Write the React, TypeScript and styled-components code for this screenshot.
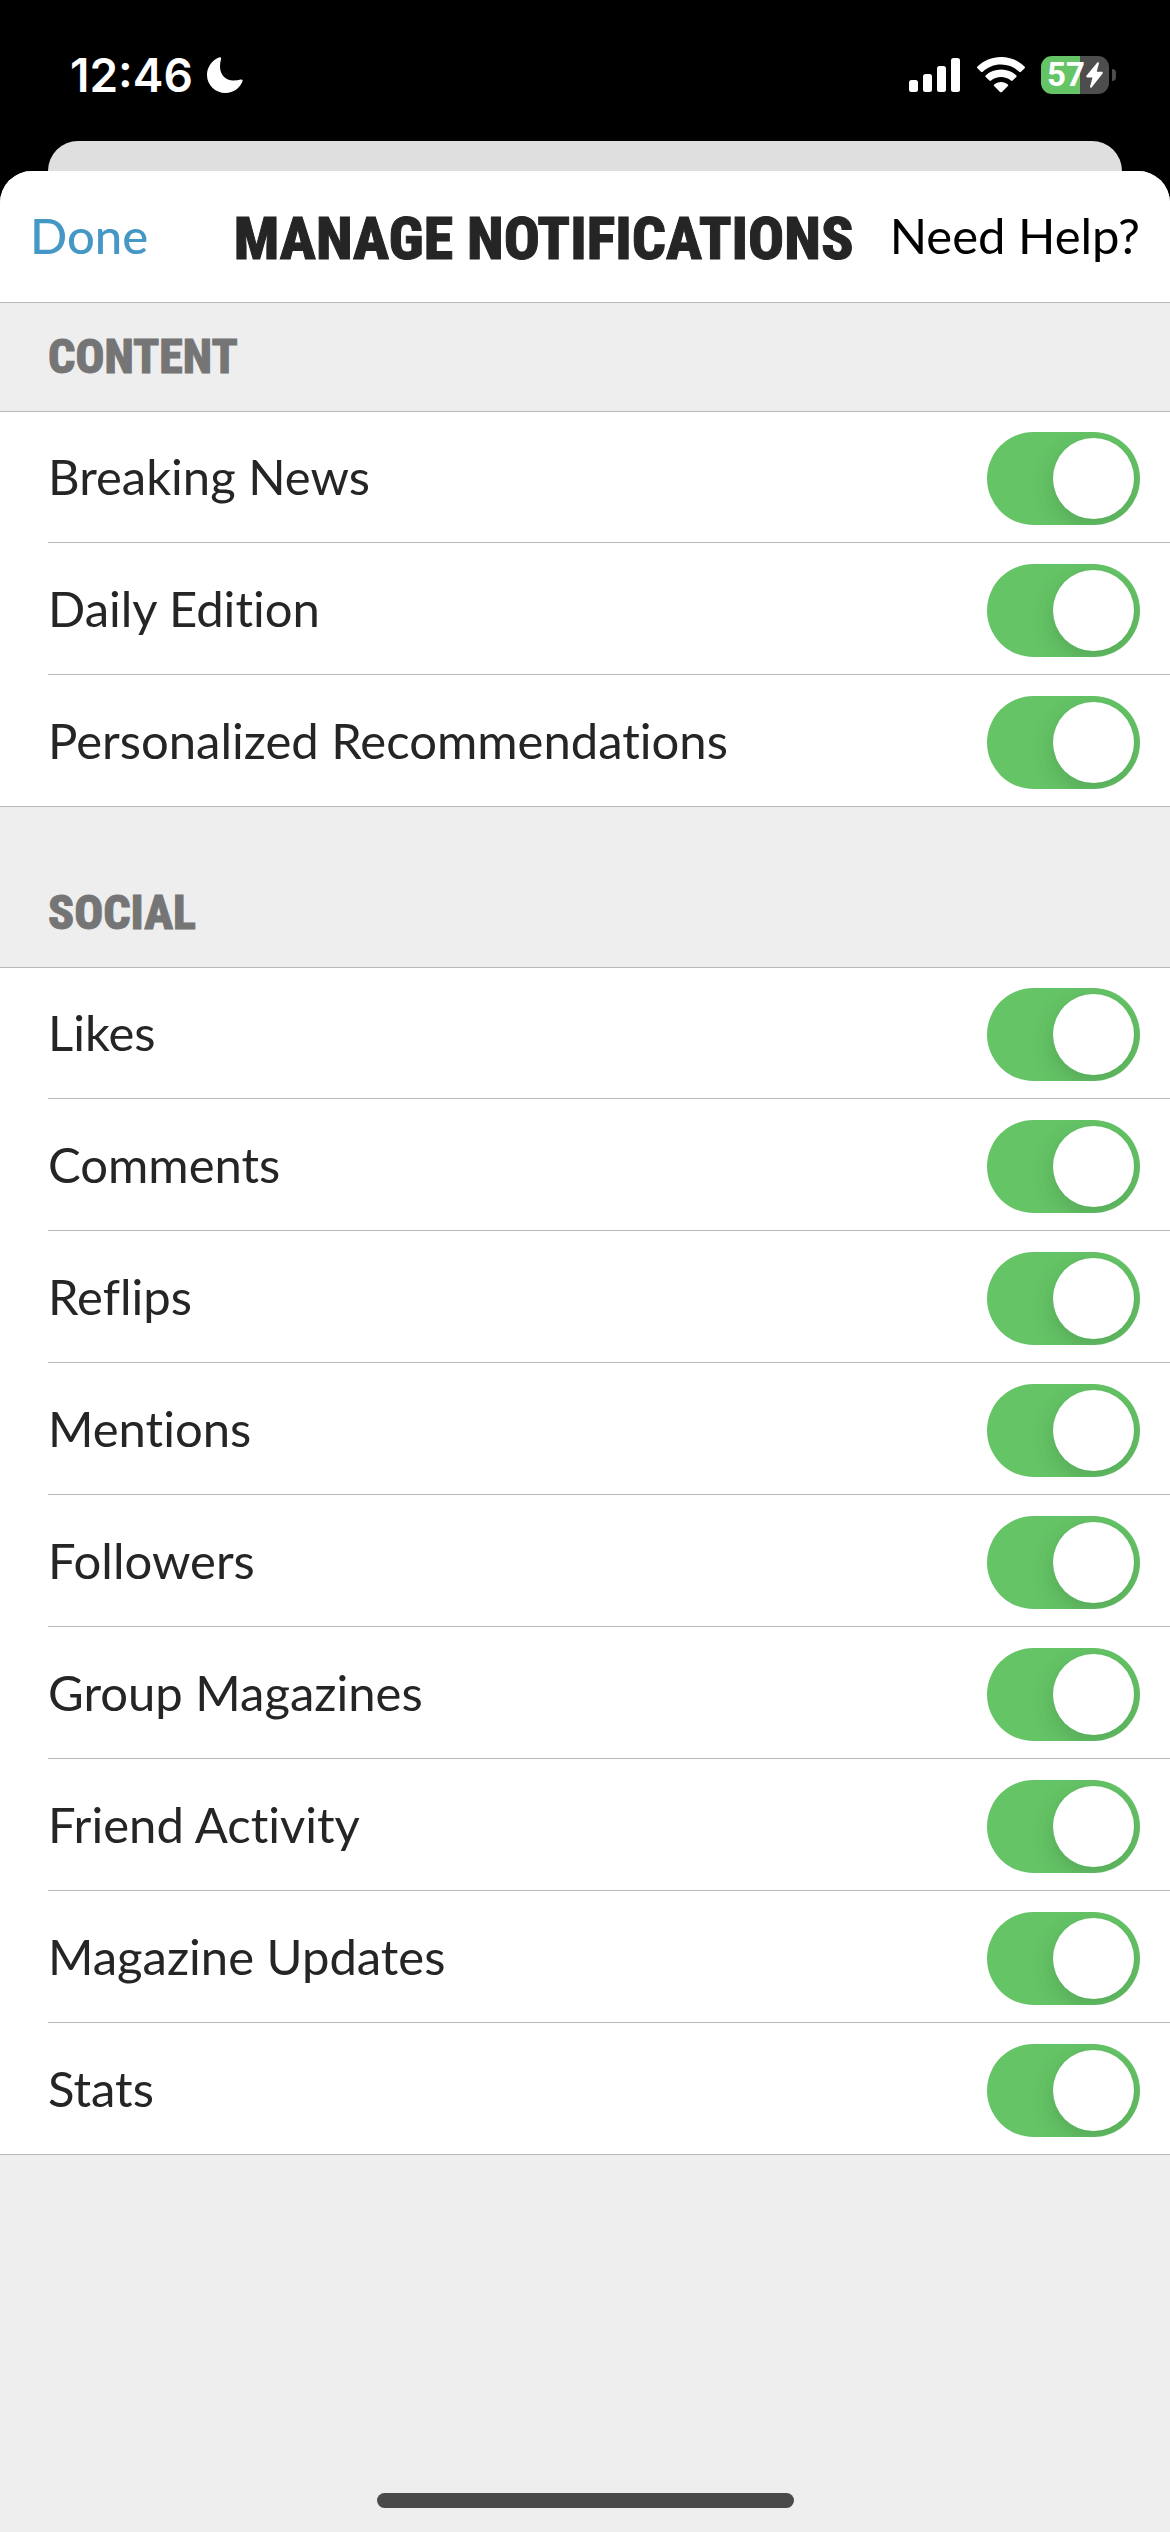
import React, { useState } from "react";
import styled, { createGlobalStyle } from "styled-components";

const textFont = `Lato, "Liberation Sans", sans-serif`;
const headFont = `"Roboto Condensed", "Open Sans Condensed", "Liberation Sans Narrow", "Liberation Sans", sans-serif`;
const systemFont = `Inter, "Liberation Sans", sans-serif`;
const rule = "#b9b9b9";

const GlobalStyle = createGlobalStyle`
  *, *::before, *::after { box-sizing: border-box; }
  html, body { margin: 0; background: #000; }
  #root { display: flow-root; }
`;

const Screen = styled.div`
  display: flex;
  flex-direction: column;
  min-height: 100vh;
  background: #000;
  font-family: ${textFont};
  font-variant-ligatures: none;
  color: #252525;
`;

const StatusBar = styled.div`
  display: flex;
  align-items: center;
  justify-content: space-between;
  height: 141px;
  padding: 8px 54px 0 70px;
  color: #fff;
`;

const StatusGroup = styled.div<{ $gap: number }>`
  display: flex;
  align-items: center;
  gap: ${(p) => p.$gap}px;
`;

const Clock = styled.time`
  font: 600 46px/56px ${systemFont};
`;

const Battery = styled.div`
  display: flex;
  align-items: center;
  gap: 3px;
`;

const BatteryBody = styled.div<{ $level: number }>`
  display: flex;
  align-items: center;
  justify-content: center;
  gap: 1px;
  width: 68px;
  height: 38px;
  border-radius: 11px;
  background: linear-gradient(to right, #65c466 ${(p) => p.$level}%, #4d4d4d ${(p) => p.$level}%);
  font: 700 33px/38px Roboto, ${systemFont};
`;

const BatteryCap = styled.div`
  width: 4px;
  height: 12px;
  border-radius: 0 4px 4px 0;
  background: #4d4d4d;
`;

const BackCard = styled.div`
  height: 30px;
  margin: 0 48px;
  border-radius: 30px 30px 0 0;
  background: #dfdfdf;
`;

const Sheet = styled.main`
  flex: 1;
  display: flex;
  flex-direction: column;
  border-radius: 32px 32px 0 0;
  overflow: hidden;
  background: #eee;
`;

const NavBar = styled.header`
  display: flex;
  align-items: center;
  gap: 36px;
  min-height: 132px;
  padding: 0 30px;
  border-bottom: 1px solid ${rule};
  background: #fff;
`;

const NavButton = styled.button<{ $accent?: boolean }>`
  padding: 0 0 4px;
  border: 0;
  background: none;
  font: ${(p) => (p.$accent ? 500 : 400)} 49px/64px ${textFont};
  color: ${(p) => (p.$accent ? "#4598c5" : "#000")};
  white-space: nowrap;
  cursor: pointer;
`;

const Title = styled.h1`
  flex: 1;
  margin: 0;
  padding-top: 4px;
  font: 800 60px/64px ${headFont};
  -webkit-text-stroke: 1px currentColor;
  text-align: right;
  white-space: nowrap;
`;

const GroupTitle = styled.h2<{ $spaced?: boolean }>`
  margin: 0;
  padding: ${(p) => (p.$spaced ? 78 : 26)}px 48px 26px;
  font: 800 48px/56px ${headFont};
  -webkit-text-stroke: 1px currentColor;
  color: #757575;
`;

const List = styled.ul`
  margin: 0;
  padding: 0 0 0 48px;
  list-style: none;
  background: #fff;
  box-shadow: inset 0 1px ${rule}, inset 0 -1px ${rule};
`;

const Row = styled.li`
  border-bottom: 1px solid ${rule};
  &:last-child { border-color: transparent; }
`;

const RowLabel = styled.label`
  display: flex;
  align-items: center;
  justify-content: space-between;
  height: 131px;
  padding: 4px 30px 0 0;
  cursor: pointer;
`;

const RowName = styled.span`
  padding-bottom: 6px;
  font-size: 49px;
  line-height: 64px;
`;

const Switch = styled.input`
  appearance: none;
  flex: none;
  display: flex;
  align-items: center;
  width: 153px;
  height: 93px;
  margin: 0;
  padding: 6px;
  border-radius: 47px;
  overflow: hidden;
  background: #e9e9eb;
  cursor: pointer;

  &::before {
    content: "";
    width: 81px;
    height: 81px;
    border-radius: 50%;
    background: #fff;
    box-shadow: 0 8px 24px rgba(0, 0, 0, 0.15);
  }
  &:checked {
    justify-content: flex-end;
    background: #65c466;
  }
`;

const HomeArea = styled.footer`
  display: flex;
  justify-content: center;
  margin-top: auto;
  padding: 24px;
`;

const HomeIndicator = styled.div`
  width: 417px;
  height: 15px;
  border-radius: 8px;
  background: #4a4a4a;
`;

const MoonIcon = () => (
  <svg width="36" height="36" viewBox="0 0 36 36" fill="#fff" aria-hidden="true">
    <path d="M12.500 .3C13.800 0 14.400 1 14 2.200C13.300 4.400 13 7 13 9.500C13 17.600 18.400 23.500 26.500 23.500C29 23.500 31.500 23.100 33.800 22.500C35.200 22.200 36 22.900 35.500 24.300C32.900 31.200 26.400 36 18.500 36C8.200 36 0 28 0 18C0 10.300 5 2.800 12.500 .3Z" />
  </svg>
);

const SignalIcon = () => (
  <svg width="52" height="36" viewBox="0 0 52 36" fill="#fff" aria-hidden="true">
    <rect x="0" y="23" width="9" height="12" rx="2.500" />
    <rect x="14" y="17" width="9" height="18" rx="2.500" />
    <rect x="28" y="9" width="9" height="26" rx="2.500" />
    <rect x="42" y="1" width="9" height="34" rx="2.500" />
  </svg>
);

const WifiIcon = () => (
  <svg width="48" height="36" viewBox="0 0 48 36" fill="#fff" aria-hidden="true">
    <path d="M24 0C33.200 0 41.400 3.600 47.500 9.500C48.100 10.100 48.100 10.800 47.600 11.300L44 14.800C43.500 15.300 42.800 15.300 42.200 14.800C37.400 10.300 31 7.600 24 7.600S10.600 10.300 5.800 14.800C5.200 15.300 4.500 15.300 4 14.800L.4 11.300C-.1 10.800-.1 10.100.5 9.500C6.600 3.600 14.800 0 24 0Z" />
    <path d="M24 12.500C29.900 12.500 35.200 14.700 39.200 18.300C39.800 18.900 39.800 19.500 39.300 20L35.600 23.600C35.100 24.100 34.500 24.100 33.900 23.600C31.300 21.300 27.800 20 24 20S16.700 21.300 14.100 23.600C13.500 24.100 12.900 24.100 12.400 23.600L8.700 20C8.200 19.500 8.200 18.900 8.800 18.300C12.800 14.700 18.100 12.500 24 12.500Z" />
    <path d="M24 25C26.700 25 29 25.900 30.800 27.400C31.400 27.900 31.400 28.500 30.900 29L25 34.900C24.400 35.500 23.600 35.500 23 34.900L17.100 29C16.600 28.500 16.600 27.900 17.200 27.400C19 25.900 21.300 25 24 25Z" />
  </svg>
);

const BoltIcon = () => (
  <svg width="17" height="26" viewBox="0 0 17 26" fill="#fff" aria-hidden="true">
    <path d="M11.300.500C12.200-.300 13.200.300 12.900 1.500L10.700 9.700H15.500C16.800 9.700 17.200 10.800 16.400 11.700L5.800 25.200C5 26.200 3.800 25.700 4.100 24.400L6.500 15.400H1.500C.2 15.400-.2 14.300.600 13.400Z" />
  </svg>
);

const groups = [
  { title: "CONTENT", items: ["Breaking News", "Daily Edition", "Personalized Recommendations"] },
  {
    title: "SOCIAL",
    items: [
      "Likes",
      "Comments",
      "Reflips",
      "Mentions",
      "Followers",
      "Group Magazines",
      "Friend Activity",
      "Magazine Updates",
      "Stats",
    ],
  },
];

function Setting({ name }: { name: string }) {
  const [on, setOn] = useState(true);
  return (
    <Row>
      <RowLabel>
        <RowName>{name}</RowName>
        <Switch type="checkbox" role="switch" checked={on} onChange={() => setOn(!on)} />
      </RowLabel>
    </Row>
  );
}

export default function App() {
  return (
    <>
      <GlobalStyle />
      <Screen>
        <StatusBar>
          <StatusGroup $gap={14}>
            <Clock>12:46</Clock>
            <MoonIcon />
          </StatusGroup>
          <StatusGroup $gap={16}>
            <SignalIcon />
            <WifiIcon />
            <Battery>
              <BatteryBody $level={57}>
                57
                <BoltIcon />
              </BatteryBody>
              <BatteryCap />
            </Battery>
          </StatusGroup>
        </StatusBar>
        <BackCard />
        <Sheet>
          <NavBar>
            <NavButton type="button" $accent>Done</NavButton>
            <Title>MANAGE NOTIFICATIONS</Title>
            <NavButton type="button">Need Help?</NavButton>
          </NavBar>
          {groups.map((group, index) => (
            <section key={group.title}>
              <GroupTitle $spaced={index > 0}>{group.title}</GroupTitle>
              <List>
                {group.items.map((name) => (
                  <Setting key={name} name={name} />
                ))}
              </List>
            </section>
          ))}
          <HomeArea>
            <HomeIndicator />
          </HomeArea>
        </Sheet>
      </Screen>
    </>
  );
}
